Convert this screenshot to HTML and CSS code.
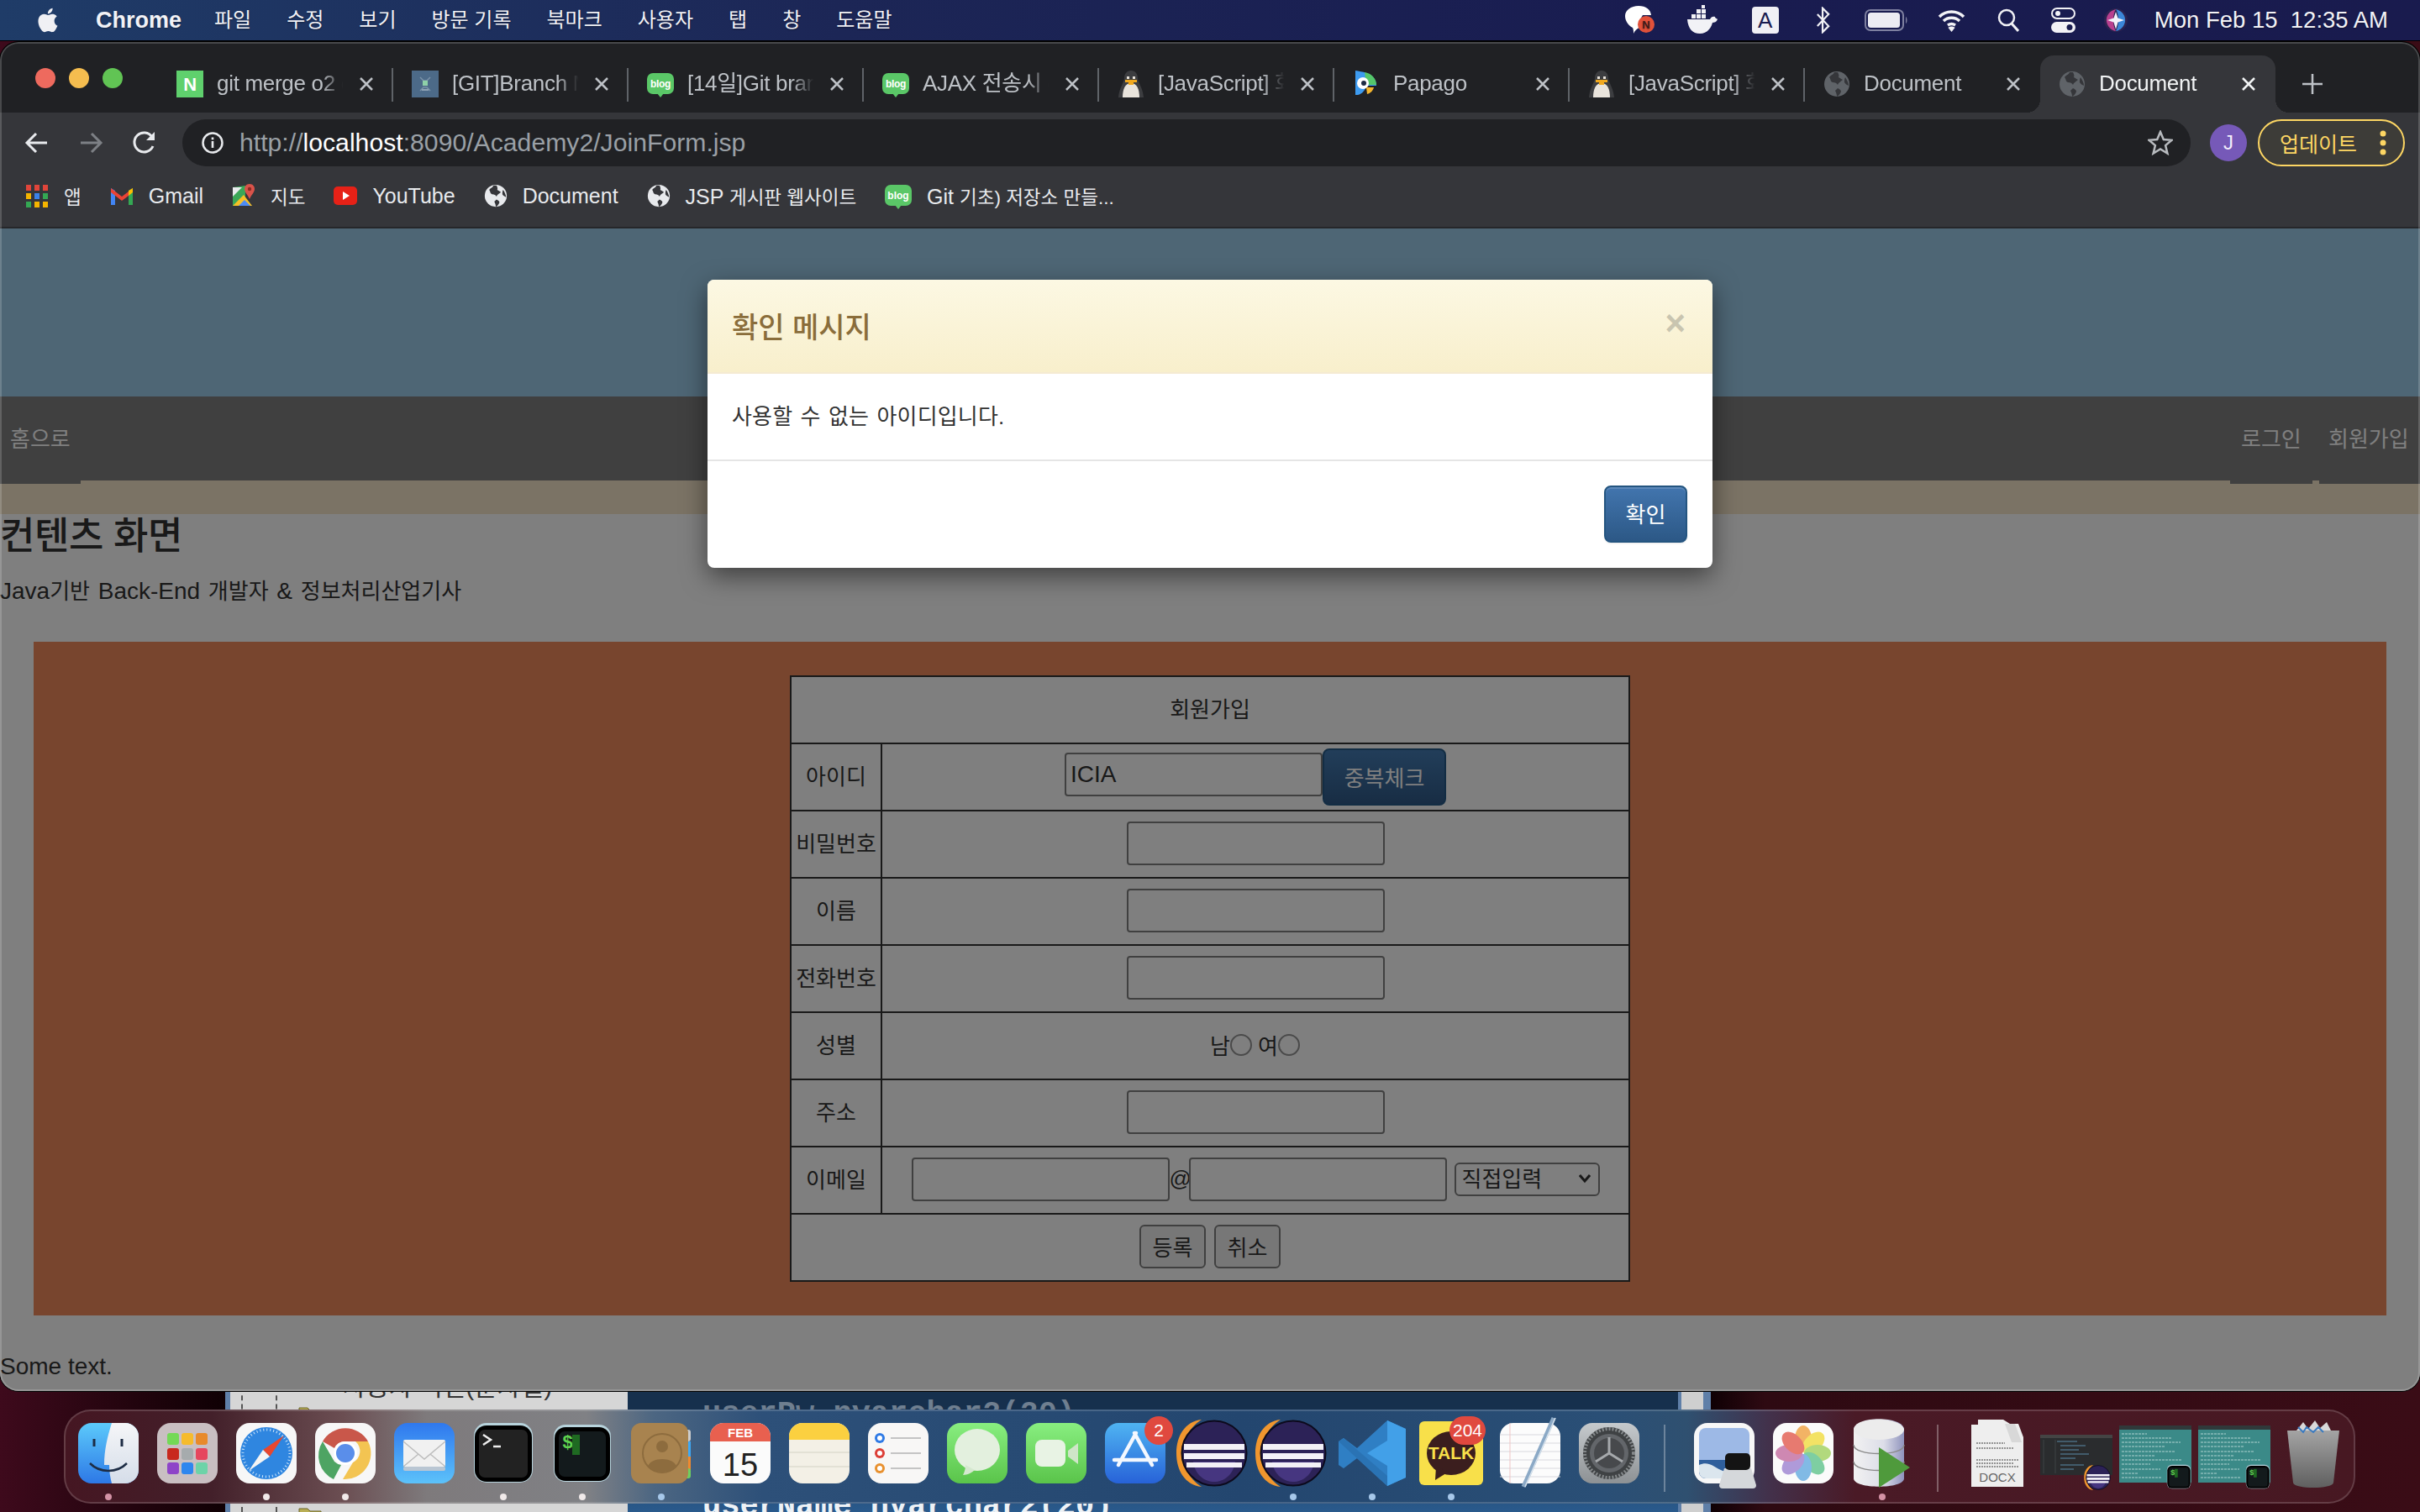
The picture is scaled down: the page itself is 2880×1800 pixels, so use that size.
FILE: index.html
```html
<!DOCTYPE html>
<html lang="ko">
<head>
    <meta charset="UTF-8">
    <title>Document</title>
    <link rel="stylesheet" href="styles.css">
</head>
<body>
    <svg class="sprite" xmlns="http://www.w3.org/2000/svg">
        <defs>
            <linearGradient id="gBlue" x1="0" y1="0" x2="0" y2="1"><stop offset="0" stop-color="#4fb4f2"/><stop offset="1" stop-color="#2762d8"/></linearGradient>
            <linearGradient id="gMail" x1="0" y1="0" x2="0" y2="1"><stop offset="0" stop-color="#2f78ee"/><stop offset="1" stop-color="#5cc2fa"/></linearGradient>
            <linearGradient id="gGreen" x1="0" y1="0" x2="0" y2="1"><stop offset="0" stop-color="#88ee80"/><stop offset="1" stop-color="#5ac44a"/></linearGradient>
            <linearGradient id="gFinder" x1="0" y1="0" x2="0" y2="1"><stop offset="0" stop-color="#5ccafb"/><stop offset="1" stop-color="#2d78e6"/></linearGradient>
            <linearGradient id="gFinderR" x1="0" y1="0" x2="0" y2="1"><stop offset="0" stop-color="#f5f6f8"/><stop offset="1" stop-color="#d5dde9"/></linearGradient>
            <linearGradient id="gGear" x1="0" y1="0" x2="0" y2="1"><stop offset="0" stop-color="#c6cacd"/><stop offset="1" stop-color="#8d9194"/></linearGradient>
            <linearGradient id="gTrash" x1="0" y1="0" x2="0" y2="1"><stop offset="0" stop-color="#a4a4a4"/><stop offset="1" stop-color="#5f5f5f"/></linearGradient>
            <linearGradient id="gDb" x1="0" y1="0" x2="1" y2="0"><stop offset="0" stop-color="#f2f2f2"/><stop offset=".6" stop-color="#dcdde8"/><stop offset="1" stop-color="#8f93bd"/></linearGradient>
        </defs>
        <symbol id="blog" viewBox="0 0 32 32">
            <rect x="0" y="3" width="32" height="25" rx="7" fill="#5ac767"/>
            <path d="M12 27h8l-4 5z" fill="#5ac767"/>
            <text x="16" y="20" text-anchor="middle" font-family="Liberation Sans" font-weight="700" font-size="12" fill="#fff">blog</text>
        </symbol>
        <symbol id="penguin" viewBox="0 0 32 32">
            <path d="M16 0c5 0 8 4 8 9 0 5 6 11 7 23H1C2 20 8 14 8 9c0-5 3-9 8-9z" fill="#3c3d40"/>
            <path d="M16 15c7 0 10 7 10 17H6c0-10 3-17 10-17z" fill="#e9e4dc"/>
            <path d="M9 11h14v3h-4v3h-6v-3H9z" fill="#f0a81e"/>
            <rect x="11" y="7" width="3" height="3" fill="#e9e4dc"/>
            <rect x="18" y="7" width="3" height="3" fill="#e9e4dc"/>
        </symbol>
        <symbol id="globe" viewBox="0 0 32 32">
            <circle cx="16" cy="16" r="15" fill="currentColor"/>
            <path d="M13 2c-1 3-4 3-6 6 2 2 1 5 4 6 3 0 5 1 6 3 1-3 4-4 6-6-2-1-3-2-5-3 1-2 0-4-1-6zM17 21c2 1 4 2 4 4-1 3-3 5-5 6 0-3-1-5-2-7 1-1 2-2 3-3zM26 8c2 3 4 7 4 10-2-1-4-2-5-4 0-2 0-4 1-6z" fill="var(--blot, #35363a)"/>
        </symbol>
        <symbol id="eclipse" viewBox="0 0 90 80">
            <path d="M30 0C10 2 0 20 0 40s10 38 30 40C14 70 8 54 8 40S14 10 30 0z" fill="#f0962e"/>
            <circle cx="45" cy="40" r="38.500" fill="#2c2257" stroke="#0c0a1c" stroke-width="2"/>
            <path d="M20 50c2 16 14 24 25 24s23-8 25-24z" fill="#463680"/>
            <path d="M9 29h72v7H9zM9 40h72v7H9zM12 51h66v6H12z" fill="#f3f1f7"/>
        </symbol>
        <symbol id="iterm-badge" viewBox="0 0 72 72">
            <rect x="2" y="2" width="68" height="68" rx="14" fill="#b7d3dc"/>
            <rect x="3" y="5" width="66" height="64" rx="13" fill="#000"/>
            <rect x="8" y="10" width="56" height="54" rx="7" fill="#131a1c"/>
            <text x="12" y="30" font-family="Liberation Mono" font-weight="700" font-size="22" fill="#5fd34f">$</text>
            <rect x="24" y="14" width="9" height="24" fill="#1f6a22"/>
        </symbol>
        <symbol id="term-lines" viewBox="0 0 86 68">
            <rect width="86" height="68" fill="#3b8a88"/>
            <rect width="86" height="5" fill="#30393a"/>
            <path d="M3 10h30M3 15h60M3 20h70M3 25h52M3 31h64M3 36h40M3 41h72M3 46h34M3 52h46M3 57h20M3 62h48" stroke="#d6ecea" stroke-width="1.200" stroke-dasharray="3 1" opacity=".75"/>
        </symbol>
    </svg>

    <!-- window behind chrome -->
    <div class="back-window">
        <div class="back-tree">
            <span class="tree-line"></span>
            <span class="tree-line second"></span>
            <p class="tree-text">사용자 비번(문자열)</p>
            <svg class="folder first" viewBox="0 0 28 22"><path d="M1 4h10l3 3h13v14H1z" fill="#b9ae55" stroke="#6b6427"/></svg>
            <svg class="folder last" viewBox="0 0 28 22"><path d="M1 4h10l3 3h13v14H1z" fill="#b9ae55" stroke="#6b6427"/></svg>
        </div>
        <div class="back-code">
            <p class="code-line dim">userPw nvarchar2(20)</p>
            <p class="code-line">userName nvarchar2(20)</p>
        </div>
        <div class="back-scroll"></div>
    </div>

    <!-- mac menu bar -->
    <header class="menubar">
        <svg class="apple" viewBox="0 0 24 24"><path fill="#f0f0f4" d="M18.710 19.500c-.83 1.240-1.710 2.450-3.050 2.470-1.340.03-1.770-.79-3.290-.79-1.530 0-2 .77-3.270.82-1.310.05-2.300-1.320-3.140-2.530C4.250 17 2.940 12.450 4.700 9.390c.87-1.520 2.430-2.480 4.120-2.510 1.280-.02 2.500.87 3.290.87.78 0 2.260-1.070 3.810-.91.65.03 2.470.26 3.640 1.980-.09.06-2.170 1.280-2.150 3.810.03 3.020 2.650 4.030 2.680 4.040-.03.07-.42 1.440-1.380 2.830M13 3.500c.73-.83 1.940-1.460 2.940-1.500.13 1.170-.34 2.350-1.040 3.190-.69.85-1.830 1.510-2.950 1.420-.15-1.150.41-2.350 1.050-3.110z"/></svg>
        <span class="menu-app">Chrome</span>
        <span class="menu-item">파일</span>
        <span class="menu-item">수정</span>
        <span class="menu-item">보기</span>
        <span class="menu-item">방문 기록</span>
        <span class="menu-item">북마크</span>
        <span class="menu-item">사용자</span>
        <span class="menu-item">탭</span>
        <span class="menu-item">창</span>
        <span class="menu-item">도움말</span>
        <div class="status">
            <svg class="st-bubble" viewBox="0 0 36 36"><path d="M17 1c9 0 14 4 15 11H22c-3 4-4 9-4 15-3 1-5 3-7 7 0-3 0-5-1-7C4 24 1 18 1 13 1 6 8 1 17 1z" fill="#fff"/><circle cx="26" cy="23" r="10" fill="#e2513a"/><text x="26" y="28" text-anchor="middle" font-family="Liberation Sans" font-weight="700" font-size="13" fill="#3a1a1a">N</text></svg>
            <svg class="st-whale" viewBox="0 0 37 36"><path d="M1 17h27c1-3 4-4 6-3 0 2 3 2 3 3-1 3-4 4-6 4-2 8-8 13-15 13C7 34 2 28 1 17z" fill="#f2f2f6"/><path d="M6 11h5v5H6zM12 11h5v5h-5zM18 11h5v5h-5zM12 5h5v5h-5zM18 5h5v5h-5zM18 0h4v4h-4z" fill="#f2f2f6"/></svg>
            <span class="st-input">A</span>
            <svg class="st-bt" viewBox="0 0 19 36"><path d="M2 10l15 16-8 8V2l8 8L2 26" fill="none" stroke="#f2f2f6" stroke-width="2.500"/></svg>
            <svg class="st-battery" viewBox="0 0 52 26"><rect x="1" y="1" width="45" height="24" rx="6" fill="none" stroke="#7e80a0" stroke-width="2"/><rect x="4" y="4" width="38" height="18" rx="3.500" fill="#ececf2"/><path d="M49 9c2 1 2 7 0 8z" fill="#7e80a0"/></svg>
            <svg class="st-wifi" viewBox="0 0 33 28"><path d="M2 10c8-8 21-8 29 0M7 15c5-5 14-5 19 0M12 20c3-2 6-2 9 0" fill="none" stroke="#f2f2f6" stroke-width="3.500"/><path d="M16.500 28l-4-5c2-2 6-2 8 0z" fill="#f2f2f6"/></svg>
            <svg class="st-search" viewBox="0 0 26 28"><circle cx="11" cy="11" r="9" fill="none" stroke="#f2f2f6" stroke-width="2.500"/><path d="M17 18l8 9" stroke="#f2f2f6" stroke-width="3"/></svg>
            <svg class="st-cc" viewBox="0 0 29 30"><rect x="1" y="1" width="27" height="12" rx="6" fill="none" stroke="#f2f2f6" stroke-width="2"/><circle cx="8" cy="7" r="3" fill="#f2f2f6"/><rect x="0" y="17" width="29" height="13" rx="6.500" fill="#f2f2f6"/><circle cx="22" cy="23.500" r="3.500" fill="#191c50"/></svg>
            <svg class="st-siri" viewBox="0 0 28 28"><circle cx="14" cy="14" r="14" fill="#2b2350"/><path d="M14 1C6 3 2 9 3 16c1 5 5 10 11 11-4-6-4-20 0-26z" fill="#b8408f"/><path d="M14 1c8 2 12 8 11 15-1 5-5 10-11 11 4-6 4-20 0-26z" fill="#3b86d8"/><path d="M14 4l2.500 7.500L24 14l-7.500 2.500L14 25l-2.500-8.500L4 14l7.500-2.500z" fill="#f4f2fa"/></svg>
            <span class="clock">Mon Feb 15  12:35 AM</span>
        </div>
    </header>

    <div class="chrome">
        <div class="tabstrip">
            <div class="lights">
                <span class="light red"></span>
                <span class="light yellow"></span>
                <span class="light green"></span>
            </div>
            <div class="tab">
                <svg class="fav" viewBox="0 0 32 32"><rect width="32" height="32" fill="#5fd06d"/><text x="16" y="24" text-anchor="middle" font-family="Liberation Sans" font-weight="700" font-size="22" fill="#fff">N</text></svg>
                <span class="tab-title">git merge o2 o2 master</span>
                <svg class="tab-x" viewBox="0 0 16 16"><path d="M1 1l14 14M15 1L1 15"/></svg>
            </div>
            <div class="tab">
                <svg class="fav" viewBox="0 0 32 32"><rect width="32" height="32" fill="#4c6a88"/><path d="M10 8l4 4h4l4-4M10 24l4-4h4l4 4" fill="none" stroke="#7b93a8" stroke-width="1.500"/><rect x="13" y="12" width="6" height="6" fill="#8fd0a8"/><rect x="12" y="22" width="8" height="2" fill="#8fa3b5"/></svg>
                <span class="tab-title">[GIT]Branch Merge</span>
                <svg class="tab-x" viewBox="0 0 16 16"><path d="M1 1l14 14M15 1L1 15"/></svg>
            </div>
            <div class="tab">
                <svg class="fav"><use href="#blog"/></svg>
                <span class="tab-title">[14일]Git branch</span>
                <svg class="tab-x" viewBox="0 0 16 16"><path d="M1 1l14 14M15 1L1 15"/></svg>
            </div>
            <div class="tab">
                <svg class="fav"><use href="#blog"/></svg>
                <span class="tab-title">AJAX 전송시 contentType</span>
                <svg class="tab-x" viewBox="0 0 16 16"><path d="M1 1l14 14M15 1L1 15"/></svg>
            </div>
            <div class="tab">
                <svg class="fav"><use href="#penguin"/></svg>
                <span class="tab-title">[JavaScript] 화면 전환</span>
                <svg class="tab-x" viewBox="0 0 16 16"><path d="M1 1l14 14M15 1L1 15"/></svg>
            </div>
            <div class="tab">
                <svg class="fav" viewBox="0 0 32 32"><path d="M3 0c4 1 9 1 13 3 8 2 12 8 12 15H16c-1 5-5 10-10 11H3z" fill="#3d9bf0"/><path d="M14 2c8 1 14 8 14 15H16z" fill="#55c76a"/><circle cx="12" cy="15" r="7" fill="#fff"/><circle cx="13" cy="15" r="3" fill="#1d2b44"/><path d="M16 20h9c-1 4-4 7-8 8z" fill="#f5b62e"/></svg>
                <span class="tab-title">Papago</span>
                <svg class="tab-x" viewBox="0 0 16 16"><path d="M1 1l14 14M15 1L1 15"/></svg>
            </div>
            <div class="tab">
                <svg class="fav"><use href="#penguin"/></svg>
                <span class="tab-title">[JavaScript] 화면 전환</span>
                <svg class="tab-x" viewBox="0 0 16 16"><path d="M1 1l14 14M15 1L1 15"/></svg>
            </div>
            <div class="tab no-div">
                <svg class="fav globe-dim"><use href="#globe"/></svg>
                <span class="tab-title">Document</span>
                <svg class="tab-x" viewBox="0 0 16 16"><path d="M1 1l14 14M15 1L1 15"/></svg>
            </div>
            <div class="tab active no-div">
                <svg class="fav globe-dim"><use href="#globe"/></svg>
                <span class="tab-title">Document</span>
                <svg class="tab-x" viewBox="0 0 16 16"><path d="M1 1l14 14M15 1L1 15"/></svg>
            </div>
            <svg class="tab-plus" viewBox="0 0 24 24"><path d="M12 0v24M0 12h24"/></svg>
        </div>

        <div class="toolbar">
            <svg class="tool" viewBox="0 0 32 32"><path d="M28 16H5M15 5L4 16l11 11" fill="none" stroke="#e8eaed" stroke-width="3"/></svg>
            <svg class="tool" viewBox="0 0 32 32"><path d="M4 16h23M17 5l11 11-11 11" fill="none" stroke="#7d8085" stroke-width="3"/></svg>
            <svg class="tool" viewBox="0 0 32 32"><path d="M26 20a11.500 11.500 0 1 1-1-11" fill="none" stroke="#e8eaed" stroke-width="3"/><path d="M28 3v10H18z" fill="#e8eaed"/></svg>
            <div class="omnibox">
                <svg class="info" viewBox="0 0 26 26"><circle cx="13" cy="13" r="11.500" fill="none" stroke="#e8eaed" stroke-width="2.500"/><rect x="11.700" y="11" width="2.600" height="8" fill="#e8eaed"/><rect x="11.700" y="6.500" width="2.600" height="2.800" fill="#e8eaed"/></svg>
                <span class="url">http://<b>localhost</b>:8090/Academy2/JoinForm.jsp</span>
                <svg class="star" viewBox="0 0 30 30"><path d="M15 2l3.800 9 9.700.8-7.400 6.300 2.300 9.500L15 22.500l-8.400 5.100 2.300-9.500L1.500 11.800l9.700-.8z" fill="none" stroke="#b8bbbf" stroke-width="2.500"/></svg>
            </div>
            <span class="avatar">J</span>
            <div class="update">
                <span>업데이트</span>
                <svg class="update-dots" viewBox="0 0 8 32"><circle cx="4" cy="5" r="3.500"/><circle cx="4" cy="16" r="3.500"/><circle cx="4" cy="27" r="3.500"/></svg>
            </div>
        </div>

        <div class="bookmarks">
            <div class="bm">
                <svg class="bm-icon" viewBox="0 0 28 28"><path d="M1 1h6v7H1z" fill="#e0453a"/><path d="M11 1h6v7h-6z" fill="#e0453a"/><path d="M21 1h6v7h-6z" fill="#e0453a"/><path d="M1 11h6v7H1z" fill="#f4b400"/><path d="M11 11h6v7h-6z" fill="#3b82e8"/><path d="M21 11h6v7h-6z" fill="#34a853"/><path d="M1 21h6v7H1z" fill="#34a853"/><path d="M11 21h6v7h-6z" fill="#f4b400"/><path d="M21 21h6v7h-6z" fill="#f4b400"/></svg>
                <span class="k">앱</span>
            </div>
            <div class="bm">
                <svg class="bm-icon" viewBox="0 0 28 28"><path d="M1 25V5l5 3v17z" fill="#4285f4"/><path d="M27 25V5l-5 3v17z" fill="#34a853"/><path d="M22 8l5-3v5l-5 4z" fill="#fbbc04"/><path d="M1 5l13 10 8-6v5l-8 6L1 10z" fill="#ea4335"/></svg>
                <span>Gmail</span>
            </div>
            <div class="bm">
                <svg class="bm-icon" viewBox="0 0 28 28"><path d="M1 4l15-2v24H1z" fill="#3aa757"/><path d="M1 26l13-13 10 13z" fill="#f6c026"/><path d="M8 26l7-7 7 7z" fill="#4c8bf5"/><path d="M1 4h11L1 15z" fill="#e8eaed"/><path d="M21 0c4 0 6 3 6 6 0 4-4 7-6 12-2-5-6-8-6-12 0-3 2-6 6-6z" fill="#d9534a"/><circle cx="21" cy="6" r="2.200" fill="#8a2a22"/></svg>
                <span class="k">지도</span>
            </div>
            <div class="bm">
                <svg class="bm-icon" viewBox="0 0 28 28"><rect x="0" y="3" width="28" height="22" rx="5" fill="#e62117"/><path d="M11 9l8 5-8 5z" fill="#fff"/></svg>
                <span>YouTube</span>
            </div>
            <div class="bm">
                <svg class="bm-icon globe-bright"><use href="#globe"/></svg>
                <span>Document</span>
            </div>
            <div class="bm">
                <svg class="bm-icon globe-bright"><use href="#globe"/></svg>
                <span>JSP <span class="k">게시판 웹사이트</span></span>
            </div>
            <div class="bm">
                <svg class="bm-icon bm-blog"><use href="#blog"/></svg>
                <span>Git <span class="k">기초) 저장소 만들...</span></span>
            </div>
        </div>

        <main class="page">
            <div class="site-top"></div>
            <nav class="site-nav">
                <a class="nav-home">홈으로</a>
                <a class="nav-login">로그인</a>
                <a class="nav-join">회원가입</a>
            </nav>
            <div class="site-strip"></div>

            <h2 class="page-title">컨텐츠 화면</h2>
            <p class="page-sub"><span class="en">Java</span>기반 <span class="en">Back-End</span> 개발자 <span class="en">&amp;</span> 정보처리산업기사</p>

            <section class="panel">
                <table class="join">
                    <tr><td class="join-title" colspan="2">회원가입</td></tr>
                    <tr>
                        <th>아이디</th>
                        <td><div class="cell-row"><input class="field field-id" type="text" value="ICIA"><button class="btn-check" type="button">중복체크</button></div></td>
                    </tr>
                    <tr><th>비밀번호</th><td><input class="field" type="password"></td></tr>
                    <tr><th>이름</th><td><input class="field" type="text"></td></tr>
                    <tr><th>전화번호</th><td><input class="field" type="text"></td></tr>
                    <tr>
                        <th>성별</th>
                        <td><div class="cell-row gender"><label>남<input type="radio" name="gender"></label><label>여<input type="radio" name="gender"></label></div></td>
                    </tr>
                    <tr><th>주소</th><td><input class="field" type="text"></td></tr>
                    <tr>
                        <th>이메일</th>
                        <td>
                            <div class="cell-row">
                                <input class="field" type="text"><span class="at">@</span><input class="field" type="text">
                                <div class="select-wrap">
                                    <select><option>직접입력</option></select>
                                    <svg viewBox="0 0 14 12"><path d="M1 2l6 7 6-7" fill="none" stroke="#333" stroke-width="3"/></svg>
                                </div>
                            </div>
                        </td>
                    </tr>
                    <tr>
                        <td colspan="2"><div class="cell-row actions"><button type="button">등록</button><button type="button">취소</button></div></td>
                    </tr>
                </table>
            </section>

            <p class="some-text">Some text.</p>

            <div class="backdrop"></div>

            <div class="modal">
                <div class="modal-head">
                    <h4>확인 메시지</h4>
                    <span class="modal-close">×</span>
                </div>
                <div class="modal-body">사용할 수 없는 아이디입니다.</div>
                <div class="modal-foot"><button type="button">확인</button></div>
            </div>
        </main>
    </div>

    <!-- dock -->
    <div class="dock">
        <div class="dock-item on pink">
            <svg class="ic" viewBox="0 0 72 72"><rect width="72" height="72" rx="16" fill="url(#gFinder)"/><path d="M40 0h16a16 16 0 0 1 16 16v40a16 16 0 0 1-16 16H40c-2-8-3-14-3-22H31c0-18 4-34 9-50z" fill="url(#gFinderR)"/><path d="M19 19v9M52 19v9" stroke="#1d2c44" stroke-width="3"/><path d="M14 48c12 12 32 12 44 0" fill="none" stroke="#1d2c44" stroke-width="2.500"/></svg>
        </div>
        <div class="dock-item">
            <svg class="ic" viewBox="0 0 72 72"><rect width="72" height="72" rx="16" fill="#c9bfc2"/><rect x="12" y="12" width="14" height="14" rx="3" fill="#74d957"/><rect x="29" y="12" width="14" height="14" rx="3" fill="#f6bb2c"/><rect x="46" y="12" width="14" height="14" rx="3" fill="#e88a2b"/><rect x="12" y="30" width="14" height="14" rx="3" fill="#c8281e"/><rect x="29" y="30" width="14" height="14" rx="3" fill="#a6abad"/><rect x="46" y="30" width="14" height="14" rx="3" fill="#e6465e"/><rect x="12" y="47" width="14" height="14" rx="3" fill="#8e44c8"/><rect x="29" y="47" width="14" height="14" rx="3" fill="#2f86ee"/><rect x="46" y="47" width="14" height="14" rx="3" fill="#6dd3a8"/></svg>
        </div>
        <div class="dock-item on">
            <svg class="ic" viewBox="0 0 72 72"><rect width="72" height="72" rx="16" fill="#f7f7f7"/><circle cx="36" cy="36" r="31" fill="#2f86e0"/><circle cx="36" cy="36" r="28" fill="none" stroke="#cfe6fa" stroke-width="3" stroke-dasharray="1 3"/><path d="M57 15L32 32l8 8z" fill="#e8472f"/><path d="M15 57l17-25 8 8z" fill="#f4f4f4"/></svg>
        </div>
        <div class="dock-item on">
            <svg class="ic" viewBox="0 0 72 72"><rect width="72" height="72" rx="16" fill="#f7f7f7"/><path d="M9 22a31 31 0 0 1 54 0H36a14 14 0 0 0-13 8z" fill="#c9574a"/><path d="M9 22l14 24a15 15 0 0 0 8 4L22 67A31 31 0 0 1 9 22z" fill="#4ea463"/><path d="M63 22a31 31 0 0 1-30 45l12-20a15 15 0 0 0 3-25z" fill="#f3c452"/><circle cx="36" cy="36" r="14" fill="#fff"/><circle cx="36" cy="36" r="11" fill="#5a8eea"/></svg>
        </div>
        <div class="dock-item">
            <svg class="ic" viewBox="0 0 72 72"><rect width="72" height="72" rx="16" fill="url(#gMail)"/><rect x="11" y="20" width="50" height="32" rx="2" fill="#f1f1f1"/><path d="M11 22l25 21 25-21M11 52l18-15M61 52L43 37" fill="none" stroke="#bdbdbd" stroke-width="1.500"/><rect x="11" y="52" width="50" height="5" rx="2" fill="#b9c6d3"/></svg>
        </div>
        <div class="dock-item on">
            <svg class="ic" viewBox="0 0 72 72"><rect x="1" y="0" width="70" height="71" rx="15" fill="#b7d3dc"/><rect x="2" y="3" width="68" height="67" rx="14" fill="#000"/><rect x="7" y="8" width="58" height="57" rx="7" fill="#222"/><path d="M12 14l9 6-9 6" fill="none" stroke="#eee" stroke-width="2.500"/><path d="M24 28h9" stroke="#eee" stroke-width="2.500"/></svg>
        </div>
        <div class="dock-item on">
            <svg class="ic"><use href="#iterm-badge"/></svg>
        </div>
        <div class="dock-item on blue">
            <svg class="ic" viewBox="0 0 72 72"><rect x="62" y="8" width="9" height="14" rx="3" fill="#ccc"/><rect x="62" y="22" width="9" height="18" fill="#3fa9f5"/><rect x="62" y="40" width="9" height="16" fill="#ef8a2f"/><rect x="62" y="54" width="9" height="12" rx="3" fill="#6fd05f"/><rect x="0" y="0" width="68" height="72" rx="12" fill="#a8834f"/><circle cx="37" cy="36" r="23" fill="none" stroke="#8d6c3e" stroke-width="2"/><circle cx="37" cy="28" r="7" fill="#8d6c3e"/><path d="M20 52c3-12 31-12 34 0-8 8-26 8-34 0z" fill="#8d6c3e"/></svg>
        </div>
        <div class="dock-item">
            <svg class="ic" viewBox="0 0 72 72"><rect width="72" height="72" rx="16" fill="#fbfbfb"/><path d="M0 22V16A16 16 0 0 1 16 0h40a16 16 0 0 1 16 16v6z" fill="#e8604f"/><text x="36" y="17" text-anchor="middle" font-family="Liberation Sans" font-weight="700" font-size="15" fill="#fff">FEB</text><text x="36" y="63" text-anchor="middle" font-family="Liberation Sans" font-size="38" fill="#222">15</text></svg>
        </div>
        <div class="dock-item">
            <svg class="ic" viewBox="0 0 72 72"><rect width="72" height="72" rx="16" fill="#f3f0e6"/><path d="M0 20V16A16 16 0 0 1 16 0h40a16 16 0 0 1 16 16v4z" fill="#fbd040"/><path d="M0 35h72M0 52h72" stroke="#dedbd0" stroke-width="1.500"/></svg>
        </div>
        <div class="dock-item">
            <svg class="ic" viewBox="0 0 72 72"><rect width="72" height="72" rx="16" fill="#f8f7f6"/><circle cx="14" cy="18" r="6" fill="#2f7ae5"/><circle cx="14" cy="18" r="3" fill="#fff"/><circle cx="14" cy="36" r="6" fill="#dc3e36"/><circle cx="14" cy="36" r="3" fill="#fff"/><circle cx="14" cy="54" r="6" fill="#e8902e"/><circle cx="14" cy="54" r="3" fill="#fff"/><path d="M27 18h36M27 36h36M27 54h36" stroke="#c4c4c4" stroke-width="2"/></svg>
        </div>
        <div class="dock-item">
            <svg class="ic" viewBox="0 0 72 72"><rect width="72" height="72" rx="16" fill="url(#gGreen)"/><ellipse cx="36" cy="32" rx="27" ry="25" fill="#e3f0de"/><path d="M22 50c0 6-2 10-3 12 5 0 11-3 14-6z" fill="#d5e8cf"/></svg>
        </div>
        <div class="dock-item">
            <svg class="ic" viewBox="0 0 72 72"><rect width="72" height="72" rx="16" fill="url(#gGreen)"/><rect x="11" y="20" width="36" height="32" rx="8" fill="#e8f3e4"/><path d="M50 33l12-9v25l-12-9z" fill="#cfe5c8"/></svg>
        </div>
        <div class="dock-item">
            <svg class="ic" viewBox="0 0 72 72"><rect width="72" height="72" rx="16" fill="url(#gBlue)"/><path d="M37 12l-21 38M35 12l21 38M11 44h50" fill="none" stroke="#f4f8ff" stroke-width="4.500" stroke-linecap="round"/></svg>
            <span class="badge small">2</span>
        </div>
        <div class="dock-item">
            <svg class="ic-eclipse"><use href="#eclipse"/></svg>
        </div>
        <div class="dock-item on blue">
            <svg class="ic-eclipse"><use href="#eclipse"/></svg>
        </div>
        <div class="dock-item on blue">
            <svg class="ic-code" viewBox="0 0 80 78"><path d="M58 0L22 33 6 21 0 25v28l6 4 16-12 36 33 22-10V10z" fill="#2f7fc4"/><path d="M58 0l22 10v58L58 78V54L34 39 58 24z" fill="#42a0e8"/><path d="M0 25l6-4 52 45v12L0 25z" fill="#2a73b4"/></svg>
        </div>
        <div class="dock-item on blue">
            <svg class="ic-talk" viewBox="0 0 76 76"><rect width="76" height="76" rx="6" fill="#f8e04a"/><ellipse cx="38" cy="38" rx="29" ry="26" fill="#3b1e1e"/><path d="M20 54l-1 16 16-10z" fill="#3b1e1e"/><text x="38" y="45" text-anchor="middle" font-family="Liberation Sans" font-weight="700" font-size="21" fill="#f8e04a">TALK</text></svg>
            <span class="badge">204</span>
        </div>
        <div class="dock-item">
            <svg class="ic" viewBox="0 0 72 72"><rect width="72" height="72" rx="16" fill="#fcfcfc"/><path d="M0 14h72M0 24h72M0 34h72M0 44h72M0 54h72M0 64h72" stroke="#d8d8de" stroke-width="1"/><path d="M12 0v72" stroke="#f0c5c5" stroke-width="1"/><path d="M64-6L28 76" stroke="#8ba9c6" stroke-width="5"/><path d="M66-6L30 76" stroke="#d7e2ec" stroke-width="1.500"/></svg>
        </div>
        <div class="dock-item">
            <svg class="ic" viewBox="0 0 72 72"><rect width="72" height="72" rx="16" fill="url(#gGear)"/><circle cx="36" cy="36" r="31" fill="#3f4244"/><circle cx="36" cy="36" r="29" fill="none" stroke="#85898b" stroke-width="4" stroke-dasharray="2 2"/><circle cx="36" cy="36" r="23" fill="#63666a"/><circle cx="36" cy="36" r="18" fill="#47494c"/><path d="M36 36V17M36 36L20 46M36 36l16 10" stroke="#a6a9ac" stroke-width="3"/></svg>
        </div>
        <span class="dock-sep"></span>
        <div class="dock-item">
            <svg class="ic" viewBox="0 0 72 72"><rect width="72" height="72" rx="16" fill="#f7f7f7"/><rect x="6" y="6" width="60" height="60" rx="8" fill="#9db9e6"/><path d="M6 44h60v14a8 8 0 0 1-8 8H14a8 8 0 0 1-8-8z" fill="#2f5f9c"/><path d="M6 50c14-6 20 6 32 8v8H14a8 8 0 0 1-8-8z" fill="#dbe6ee"/><path d="M36 54h32l6 20a4 4 0 0 1-4 4H34a4 4 0 0 1-4-4z" fill="#d5d8db"/><rect x="37" y="36" width="30" height="20" rx="5" fill="#141414"/></svg>
        </div>
        <div class="dock-item">
            <svg class="ic" viewBox="0 0 72 72"><rect width="72" height="72" rx="16" fill="#fbfbfb"/><g opacity=".78"><ellipse cx="36" cy="19" rx="10" ry="16" fill="#f0a03c"/><ellipse cx="36" cy="19" rx="10" ry="16" transform="rotate(45 36 36)" fill="#f2dc3c"/><ellipse cx="36" cy="19" rx="10" ry="16" transform="rotate(90 36 36)" fill="#9ed05a"/><ellipse cx="36" cy="19" rx="10" ry="16" transform="rotate(135 36 36)" fill="#5cc28a"/><ellipse cx="36" cy="19" rx="10" ry="16" transform="rotate(180 36 36)" fill="#5fa8e0"/><ellipse cx="36" cy="19" rx="10" ry="16" transform="rotate(225 36 36)" fill="#9a7fd0"/><ellipse cx="36" cy="19" rx="10" ry="16" transform="rotate(270 36 36)" fill="#c2689e"/><ellipse cx="36" cy="19" rx="10" ry="16" transform="rotate(315 36 36)" fill="#e2564a"/></g></svg>
        </div>
        <div class="dock-item on pink">
            <svg class="ic-db" viewBox="0 0 72 82"><path d="M2 13c0-17 60-17 60 0v58c0 13-60 13-60 0z" fill="url(#gDb)"/><ellipse cx="32" cy="13" rx="30" ry="12" fill="#ececec"/><path d="M2 31c0 14 60 14 60 0M2 51c0 14 60 14 60 0" fill="none" stroke="#8a8a8a" stroke-width="1.500"/><path d="M32 34l37 24-37 24z" fill="#4f9a3c"/></svg>
        </div>
        <span class="dock-sep"></span>
        <div class="dock-item">
            <svg class="ic-doc" viewBox="0 0 62 80"><path d="M0 6h8V0h30l8 5h10l6 16v59H0z" fill="#eeeeee"/><path d="M40 5h12l8 22-12 0z" fill="#d8d8d8"/><path d="M6 28h34M6 34h44M6 48h50M6 52h44M6 56h50" stroke="#777" stroke-width="1.500" stroke-dasharray="2 1"/><text x="31" y="74" text-anchor="middle" font-family="Liberation Sans" font-size="15" fill="#666">DOCX</text></svg>
        </div>
        <div class="dock-item">
            <svg class="ic-screen" viewBox="0 0 86 74"><rect width="86" height="48" fill="#2a2c2e"/><rect width="86" height="4" fill="#444"/><path d="M20 8h24M24 13h30M24 18h22M24 23h34M24 28h18M24 36h28M24 41h16" stroke="#5b89a8" stroke-width="1.200"/><path d="M4 6v40M18 6v40" stroke="#3f4245" stroke-width="1"/><svg x="52" y="36" width="34" height="30" viewBox="0 0 90 80"><use href="#eclipse"/></svg></svg>
        </div>
        <div class="dock-item">
            <svg class="ic-term" viewBox="0 0 86 78"><use href="#term-lines" width="86" height="68"/><svg x="56" y="44" width="30" height="34" viewBox="0 0 72 72"><use href="#iterm-badge"/></svg></svg>
        </div>
        <div class="dock-item">
            <svg class="ic-term" viewBox="0 0 86 78"><use href="#term-lines" width="86" height="68"/><svg x="56" y="44" width="30" height="34" viewBox="0 0 72 72"><use href="#iterm-badge"/></svg></svg>
        </div>
        <div class="dock-item">
            <svg class="ic-trash" viewBox="0 0 64 82"><path d="M1 14h62l-7 62c-1 8-47 8-48 0z" fill="url(#gTrash)"/><path d="M12 14l8-10 6 8 8-10 6 9 8-7 5 10z" fill="#d9d9d9"/><path d="M14 10l6 6 4-6 8 6 6-6 6 6" fill="none" stroke="#3b7bc0" stroke-width="2"/></svg>
        </div>
    </div>
</body>
</html>
```
FILE: styles.css
```css
* {
    box-sizing: border-box;
}
html, body {
    margin: 0;
    padding: 0;
}
body {
    position: relative;
    width: 2880px;
    height: 1800px;
    overflow: hidden;
    background: linear-gradient(90deg, #3e0a1c 0, #0f0004 268px, #0f0004 2036px, #2e0a12 2100px, #3a0c16 100%);
    font-family: "Liberation Sans", "Noto Sans CJK KR", sans-serif;
    font-size: 26px;
}
p, h2, h4 {
    margin: 0;
    font-weight: normal;
}
.sprite {
    position: absolute;
    width: 0;
    height: 0;
}

/* desktop: window behind chrome */
.back-window {
    position: absolute;
    left: 268px;
    top: 1600px;
    width: 1768px;
    height: 200px;
    display: flex;
}
.back-tree {
    position: relative;
    width: 479px;
    background: #d6d6d6;
    border-left: 6px solid #5f7fa8;
    color: #333;
}
.tree-line {
    position: absolute;
    left: 13px;
    top: 0;
    bottom: 0;
    border-left: 2px dashed #555;
}
.tree-line.second {
    left: 54px;
}
.tree-text {
    position: absolute;
    left: 134px;
    top: 26px;
    font-size: 30px;
    white-space: nowrap;
}
.folder {
    position: absolute;
    left: 81px;
    width: 28px;
    height: 22px;
}
.folder.first {
    top: 72px;
}
.folder.last {
    top: 192px;
}
.back-code {
    flex: 1;
    padding-left: 89px;
    background: linear-gradient(#16304d 0, #16304d 80px, #2a5a8c 100%);
    color: #eef2f6;
}
.code-line {
    font-family: "Liberation Mono", monospace;
    font-weight: 700;
    font-size: 37px;
    line-height: 46px;
    white-space: pre;
}
.code-line.dim {
    padding: 60px 0 64px 0;
    color: #6f7f90;
}
.back-scroll {
    width: 39px;
    background: #cfcfcf;
    border-left: 4px solid #5f7fa8;
    border-right: 9px solid #5f7fa8;
}

/* menu bar */
.menubar {
    position: absolute;
    left: 0;
    top: 0;
    width: 100%;
    height: 49px;
    display: flex;
    align-items: center;
    gap: 42px;
    padding: 0 38px 0 40px;
    background: linear-gradient(90deg, #1f3c68, #1c2656 1000px, #191c50 2000px, #191b4e);
    border-bottom: 1px solid #000;
    color: #f2f2f6;
    text-shadow: 0 1px 2px rgba(0, 0, 0, .35);
}
.apple {
    width: 34px;
    height: 34px;
}
.menu-app {
    font-weight: 700;
    font-size: 27px;
    margin: 0 -3px 0 -2px;
}
.menu-item {
    padding-bottom: 6px;
    font-size: 24px;
    white-space: pre;
}
.status {
    margin-left: auto;
    display: flex;
    align-items: center;
    gap: 38px;
}
.st-bubble { width: 36px; height: 36px; }
.st-whale { width: 37px; height: 36px; }
.st-input {
    width: 32px;
    height: 32px;
    margin-left: 3px;
    border-radius: 4px;
    background: #f0f0f5;
    color: #191c50;
    font-size: 26px;
    line-height: 32px;
    text-align: center;
    text-shadow: none;
}
.st-bt { width: 19px; height: 32px; margin-left: 5px; }
.st-battery { width: 52px; height: 26px; margin-left: 2px; }
.st-wifi { width: 33px; height: 28px; margin-left: -3px; }
.st-search { width: 26px; height: 28px; }
.st-cc { width: 29px; height: 30px; }
.st-siri { width: 28px; height: 28px; margin-left: -4px; }
.clock {
    margin-left: -6px;
    font-size: 27.500px;
    white-space: pre;
}

/* chrome window */
.chrome {
    position: absolute;
    left: 0;
    top: 50px;
    width: 2880px;
    height: 1606px;
    border-radius: 22px;
    overflow: hidden;
    display: flex;
    flex-direction: column;
    background: #202124;
    box-shadow: 0 0 0 1px #000;
}
.chrome::after {
    content: "";
    position: absolute;
    inset: 0;
    border: 2px solid rgba(255, 255, 255, .18);
    border-radius: 22px;
    pointer-events: none;
}
.tabstrip {
    height: 84px;
    flex: none;
    display: flex;
    align-items: flex-end;
}
.lights {
    width: 188px;
    align-self: flex-start;
    display: flex;
    gap: 16px;
    padding: 31px 0 0 42px;
}
.light {
    width: 24px;
    height: 24px;
    border-radius: 50%;
}
.light.red { background: #ee6a5e; }
.light.yellow { background: #f5bd4f; }
.light.green { background: #61c454; }
.tab {
    position: relative;
    width: 280px;
    height: 68px;
    flex: none;
    display: flex;
    align-items: center;
    padding: 0 22px;
    color: #bdc1c6;
    font-size: 26px;
    letter-spacing: -.3px;
}
.tab::after {
    content: "";
    position: absolute;
    right: 0;
    top: 15px;
    width: 2px;
    height: 40px;
    background: #5f6368;
}
.tab.no-div::after {
    display: none;
}
.tab.active {
    background: #35363a;
    border-radius: 16px 16px 0 0;
    color: #f1f3f4;
}
.tab.active::before,
.tab.active::after {
    content: "";
    display: block;
    position: absolute;
    bottom: 0;
    top: auto;
    width: 16px;
    height: 16px;
    background: radial-gradient(circle at 0 0, transparent 16px, #35363a 16px);
}
.tab.active::before {
    left: -16px;
}
.tab.active::after {
    right: -16px;
    background: radial-gradient(circle at 100% 0, transparent 16px, #35363a 16px);
}
.fav {
    width: 32px;
    height: 32px;
    flex: none;
}
.globe-dim {
    color: #5f6368;
    --blot: #35363a;
}
.tab-title {
    width: 160px;
    height: 34px;
    margin: 0 8px 0 16px;
    flex: none;
    overflow: hidden;
    line-height: 32px;
    white-space: nowrap;
    -webkit-mask-image: linear-gradient(90deg, #000 78%, transparent 94%);
}
.tab-x {
    width: 16px;
    height: 16px;
    margin-left: 2px;
    fill: none;
    stroke: currentColor;
    stroke-width: 2.500;
}
.tab-plus {
    width: 24px;
    height: 24px;
    margin: 0 0 22px 32px;
    fill: none;
    stroke: #bdc1c6;
    stroke-width: 2.500;
}
.toolbar {
    height: 64px;
    flex: none;
    display: flex;
    align-items: flex-end;
    gap: 32px;
    padding: 0 18px 0 28px;
    background: #35363a;
}
.tool {
    width: 32px;
    height: 32px;
    margin-bottom: 12px;
}
.omnibox {
    flex: 1;
    height: 56px;
    margin-left: -3px;
    display: flex;
    align-items: center;
    gap: 19px;
    padding: 0 21px 0 23px;
    border-radius: 28px;
    background: #202124;
}
.info {
    width: 26px;
    height: 26px;
}
.url {
    color: #9aa0a6;
    font-size: 30.200px;
}
.url b {
    color: #fff;
    font-weight: normal;
}
.star {
    width: 30px;
    height: 30px;
    margin-left: auto;
}
.avatar {
    width: 44px;
    height: 44px;
    margin: 0 -19px 6px -9px;
    border-radius: 50%;
    background: #7659b8;
    color: #f3eefc;
    font-size: 24px;
    line-height: 44px;
    text-align: center;
}
.update {
    width: 175px;
    height: 56px;
    display: flex;
    align-items: center;
    justify-content: space-between;
    padding: 0 20px 0 24px;
    border: 2px solid #fdd663;
    border-radius: 28px;
    background: #3d3c38;
    color: #fdd663;
    font-size: 25px;
}
.update-dots {
    width: 8px;
    height: 32px;
    fill: #fdd663;
}
.bookmarks {
    height: 74px;
    flex: none;
    display: flex;
    align-items: center;
    gap: 34px;
    padding: 0 0 2px 30px;
    border-bottom: 2px solid #26272a;
    background: #35363a;
    color: #e8eaed;
    font-size: 25px;
}
.bm {
    display: flex;
    align-items: center;
    gap: 18px;
    white-space: pre;
}
.bm .k {
    font-size: 22.500px;
}
.bm-icon {
    width: 28px;
    height: 28px;
    flex: none;
}
.bm-blog {
    width: 32px;
    height: 32px;
}
.globe-bright {
    color: #e8eaed;
    --blot: #35363a;
}

/* page inside browser */
.page {
    position: relative;
    flex: 1;
    background: #fff;
    color: #333;
    overflow: hidden;
}
.site-top {
    height: 200px;
    background: #9ccceb;
}
.site-nav {
    height: 100px;
    display: flex;
    gap: 8px;
    background: #808080;
}
.site-nav a {
    position: relative;
    height: 104px;
    padding: 0 13px;
    background: #808080;
    color: #fff;
    line-height: 102px;
    white-space: nowrap;
}
.nav-home {
    width: 96px;
    padding-left: 12px !important;
}
.nav-login {
    width: 98px;
    margin-left: auto;
}
.nav-join {
    width: 120px;
    padding-left: 11px !important;
}
.site-strip {
    height: 40px;
    background: #f6e6ca;
}
.page-title {
    height: 50px;
    font-size: 45px;
    font-weight: 500;
    line-height: 54px;
    letter-spacing: -.4px;
}
.page-sub {
    height: 40px;
    margin: 21px 0 41px;
    line-height: 41px;
    word-spacing: 2.500px;
}
.en {
    font-size: 28px;
}
.panel {
    height: 802px;
    margin: 0 40px;
    padding-top: 40px;
    background: #f08a5d;
}
.join {
    width: 1000px;
    margin: 0 auto;
    border-collapse: collapse;
    background: #fff;
}
.join th,
.join td {
    height: 80px;
    padding: 0 0 3px;
    border: 2px solid #333;
    font-weight: normal;
    text-align: center;
}
.join th,
.join .join-title {
    padding-bottom: 5px;
}
.join th {
    width: 108px;
}
.cell-row {
    display: flex;
    align-items: center;
    justify-content: center;
}
.field {
    display: inline-block;
    vertical-align: middle;
    width: 307px;
    height: 52px;
    padding: 0 5px;
    border: 2px solid #808080;
    border-radius: 4px;
    background: #fff;
    color: #333;
    font: 28px "Liberation Sans", sans-serif;
    outline: none;
}
.field-id {
    margin-bottom: 3px;
}
.btn-check {
    width: 147px;
    height: 68px;
    margin-top: 2px;
    padding: 0;
    border: 2px solid #265a88;
    border-radius: 8px;
    background: linear-gradient(#447cb4, #305a88);
    color: #fff;
    font: inherit;
}
.gender {
    gap: 7px;
    margin-left: -1px;
}
.gender label {
    display: flex;
    align-items: center;
}
.gender input {
    appearance: none;
    width: 26px;
    height: 26px;
    margin: 0;
    border: 2px solid #949494;
    border-radius: 50%;
    background: #fff;
}
.at {
    width: 23px;
    font-size: 26px;
}
.select-wrap {
    position: relative;
    margin-left: 9px;
}
.select-wrap select {
    display: block;
    appearance: none;
    width: 173px;
    height: 40px;
    padding: 0 0 0 7px;
    border: 2px solid #808080;
    border-radius: 6px;
    background: #fff;
    color: #333;
    font: inherit;
}
.select-wrap svg {
    position: absolute;
    right: 11px;
    top: 13px;
    width: 14px;
    height: 12px;
}
.actions {
    gap: 10px;
}
.actions button {
    width: 79px;
    height: 52px;
    padding: 0;
    border: 2px solid #808080;
    border-radius: 6px;
    background: #efefef;
    color: #333;
    font: inherit;
}
.some-text {
    margin-top: 40px;
    font-size: 28px;
    line-height: 42px;
}
.backdrop {
    position: absolute;
    inset: 0;
    background: rgba(0, 0, 0, .5);
}
.modal {
    position: absolute;
    left: 842px;
    top: 61px;
    width: 1196px;
    height: 343px;
    border-radius: 8px;
    overflow: hidden;
    background: #fff;
    box-shadow: 0 10px 30px rgba(0, 0, 0, .5);
}
.modal-head {
    height: 112px;
    display: flex;
    align-items: center;
    justify-content: space-between;
    padding: 0 32px 0 29px;
    border-bottom: 2px solid #f5ead2;
    background: linear-gradient(#fcf8e3, #f8efcc);
    color: #8a6d3b;
}
.modal-head h4 {
    margin-top: -2px;
    font-size: 34px;
    font-weight: 500;
}
.modal-close {
    margin-top: -7px;
    color: #c9c5b0;
    font-size: 42px;
    font-weight: 700;
}
.modal-body {
    height: 102px;
    padding: 33px 29px 0;
    line-height: 36px;
    letter-spacing: .15px;
    word-spacing: 2px;
}
.modal-foot {
    display: flex;
    justify-content: flex-end;
    padding: 29px 30px 0;
    border-top: 2px solid #e5e5e5;
}
.modal-foot button {
    width: 99px;
    height: 68px;
    padding: 0 0 3px;
    border: 2px solid #245580;
    border-radius: 8px;
    background: linear-gradient(#4275ae, #2c5886);
    box-shadow: inset 0 2px 0 rgba(255, 255, 255, .15), 0 1px 2px rgba(0, 0, 0, .1);
    color: #fff;
    font: inherit;
}

/* dock */
.dock {
    position: absolute;
    left: 76px;
    top: 1678px;
    width: 2727px;
    height: 112px;
    display: flex;
    padding: 16px 0 0 4px;
    border: 2px solid rgba(255, 255, 255, .16);
    border-radius: 32px;
    background: linear-gradient(90deg, #451622 0, #43202a 174px, #6b4e52 330px, #7e7a7c 430px, #808185 620px, #4c6682 700px, #2d5079 830px, #23466f 1400px, #2a4f76 1830px, #2f5070 1930px, #43304a 2030px, #4a1a26 2130px, #471822 100%);
}
.dock-item {
    position: relative;
    width: 94px;
    height: 72px;
    flex: none;
    display: flex;
    align-items: center;
    justify-content: center;
    margin-top: -2px;
}
.dock-item.on::after {
    content: "";
    position: absolute;
    left: 43px;
    top: 84px;
    width: 8px;
    height: 8px;
    border-radius: 50%;
    background: #f1eaea;
}
.dock-item.on.blue::after {
    background: #a7c8ea;
}
.dock-item.on.pink::after {
    background: #d493a6;
}
.ic { width: 72px; height: 72px; flex: none; overflow: visible; }
.ic-eclipse { width: 90px; height: 80px; flex: none; }
.ic-code { width: 80px; height: 78px; flex: none; }
.ic-talk { width: 76px; height: 76px; flex: none; }
.ic-db { width: 72px; height: 82px; flex: none; }
.ic-doc { width: 62px; height: 80px; flex: none; }
.ic-screen { width: 86px; height: 74px; flex: none; margin-top: 30px; }
.ic-term { width: 86px; height: 78px; flex: none; margin-top: 12px; }
.ic-trash { width: 64px; height: 82px; flex: none; }
.badge {
    position: absolute;
    right: 6px;
    top: -8px;
    min-width: 34px;
    height: 34px;
    padding: 0 4px;
    border-radius: 17px;
    background: #e0493f;
    color: #fff;
    font-size: 21px;
    line-height: 34px;
    text-align: center;
}
.badge.small {
    right: 2px;
}
.dock-sep {
    width: 2px;
    height: 80px;
    flex: none;
    margin: 0 23px 0 18px;
    background: rgba(255, 255, 255, .3);
}
```
